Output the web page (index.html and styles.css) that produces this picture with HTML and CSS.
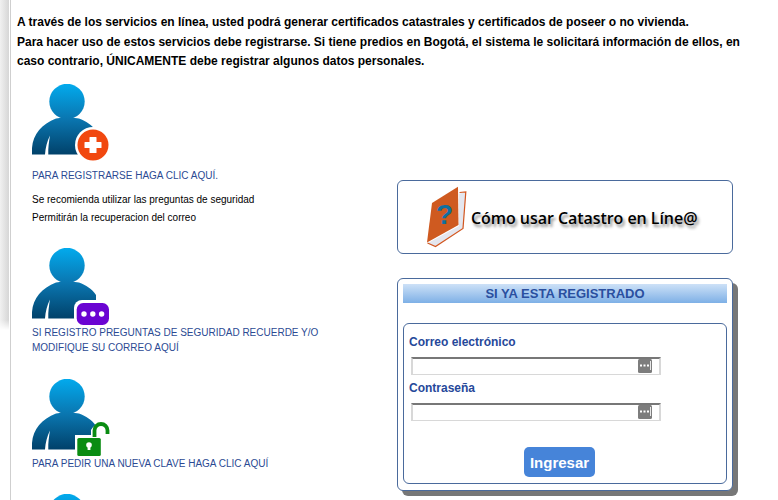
FILE: index.html
```html
<!DOCTYPE html>
<html lang="es">
<head>
<meta charset="utf-8">
<title>Catastro en Línea</title>
<link rel="stylesheet" href="styles.css">
</head>
<body>
<svg class="defs" width="0" height="0" aria-hidden="true">
  <defs>
    <linearGradient id="pg" gradientUnits="userSpaceOnUse" x1="0" y1="0" x2="0" y2="70">
      <stop offset="0" stop-color="#02aaed"/>
      <stop offset="0.5" stop-color="#0a76b0"/>
      <stop offset="1" stop-color="#01426b"/>
    </linearGradient>
    <symbol id="person" viewBox="0 0 80 80">
      <circle cx="35" cy="17.500" r="17.700" fill="url(#pg)"/>
      <path fill="url(#pg)" d="M0 70.500V64C1 50 10 40 24 34.500L35 33L47 34.500C54 37 60 41 64 47L64 70.500H16.300C16 64 17 57 18 51.500C15 57 13.500 64 13 70.500Z"/>
    </symbol>
  </defs>
</svg>
<div class="edge"></div>
<main class="page">
  <section class="intro">
    <p>A través de los servicios en línea, usted podrá generar certificados catastrales y certificados de poseer o no vivienda.</p>
    <p>Para hacer uso de estos servicios debe registrarse. Si tiene predios en Bogotá, el sistema le solicitará información de ellos, en caso contrario, ÚNICAMENTE debe registrar algunos datos personales.</p>
  </section>
  <div class="columns">
    <div class="left">
      <div class="item item-one">
        <svg class="avatar" viewBox="0 0 80 77" width="80" height="77">
          <use href="#person" width="80" height="80"/>
          <circle cx="61" cy="61" r="18" fill="#fff"/>
          <circle cx="61" cy="61" r="15.500" fill="#f1480f"/>
          <path d="M58 53h6a.5.500 0 0 1 .5.500V58h4.500a.5.500 0 0 1 .5.500v5a.5.500 0 0 1-.5.500h-4.500v4.500a.5.500 0 0 1-.5.500h-6a.5.500 0 0 1-.5-.500V64H53a.5.500 0 0 1-.5-.500v-5a.5.500 0 0 1 .5-.500h4.500v-4.500a.5.500 0 0 1 .5-.500z" fill="#fff"/>
        </svg>
        <a class="link" href="#">PARA REGISTRARSE HAGA CLIC AQUÍ.</a>
        <p class="note">Se recomienda utilizar las preguntas de seguridad</p>
        <p class="note">Permitirán la recuperacion del correo</p>
      </div>
      <div class="item item-two">
        <svg class="avatar" viewBox="0 0 80 77" width="80" height="77">
          <use href="#person" width="80" height="80"/>
          <rect x="42" y="52" width="36" height="26" rx="8" fill="#fff"/>
          <rect x="44.700" y="55" width="32.300" height="22" rx="6.500" fill="#6a04d2"/>
          <circle cx="52" cy="66" r="2.700" fill="#fff"/>
          <circle cx="60.800" cy="66" r="2.700" fill="#fff"/>
          <circle cx="69.600" cy="66" r="2.700" fill="#fff"/>
        </svg>
        <a class="link" href="#">SI REGISTRO PREGUNTAS DE SEGURIDAD RECUERDE Y/O MODIFIQUE SU CORREO AQUÍ</a>
      </div>
      <div class="item item-three">
        <svg class="avatar" viewBox="0 0 80 77" width="80" height="77">
          <use href="#person" width="80" height="80"/>
          <path d="M43 56h16v-5a12 12 0 0 1 21 0v13h-9v14h-28z" fill="#fff"/>
          <path d="M62.500 58v-6.500a6.500 6.500 0 0 1 13 0v3.500" fill="none" stroke="#0a8c12" stroke-width="3.800"/>
          <rect x="45.300" y="59" width="23.500" height="18" rx="1.500" fill="#0a8c12"/>
          <circle cx="57" cy="66" r="2.800" fill="#fff"/>
          <rect x="55.600" y="66" width="2.800" height="5" fill="#fff"/>
        </svg>
        <a class="link" href="#">PARA PEDIR UNA NUEVA CLAVE HAGA CLIC AQUÍ</a>
      </div>
      <div class="item item-four">
        <svg class="avatar" viewBox="0 0 80 77" width="80" height="77">
          <use href="#person" width="80" height="80"/>
        </svg>
      </div>
    </div>
    <div class="right">
      <a class="help" href="#">
        <svg class="book" viewBox="0 0 42 62" width="42" height="62">
          <path d="M33 7.500L40 6.500L37 42L9 60.500L2 57L33 40Z" fill="#e4e6ee"/>
          <path d="M33.500 6.500L39.800 6L37 42.500L9.500 60.500L1.500 57" fill="none" stroke="#d2561f" stroke-width="1.200"/>
          <path d="M32 0.700L32.500 39L1 56.500L6 17Z" fill="#cf5a20"/>
          <text class="book-mark" x="10" y="38">?</text>
        </svg>
        <span class="help-text">Cómo usar Catastro en Líne@</span>
      </a>
      <section class="login">
        <h2 class="login-title">SI YA ESTA REGISTRADO</h2>
        <form class="login-form">
          <label class="label" for="correo">Correo electrónico</label>
          <div class="field">
            <input class="input" id="correo" type="text">
            <svg class="key" viewBox="0 0 14 14" width="14" height="14">
              <rect width="14" height="14" rx="1.500" fill="#7d7d7d"/>
              <rect x="2" y="5.500" width="2" height="2" fill="#fff"/>
              <rect x="5.500" y="5.500" width="2" height="2" fill="#fff"/>
              <rect x="9" y="5.500" width="2" height="2" fill="#fff"/>
              <rect x="12" y="2" width="1" height="9" fill="#e8e8e8"/>
            </svg>
          </div>
          <label class="label label-next" for="clave">Contraseña</label>
          <div class="field">
            <input class="input" id="clave" type="password">
            <svg class="key" viewBox="0 0 14 14" width="14" height="14">
              <rect width="14" height="14" rx="1.500" fill="#7d7d7d"/>
              <rect x="2" y="5.500" width="2" height="2" fill="#fff"/>
              <rect x="5.500" y="5.500" width="2" height="2" fill="#fff"/>
              <rect x="9" y="5.500" width="2" height="2" fill="#fff"/>
              <rect x="12" y="2" width="1" height="9" fill="#e8e8e8"/>
            </svg>
          </div>
          <div class="actions">
            <button class="submit" type="button">Ingresar</button>
          </div>
        </form>
      </section>
    </div>
  </div>
</main>
</body>
</html>
```
FILE: styles.css
```css
* {
  box-sizing: border-box;
}

html,
body {
  margin: 0;
  height: 500px;
  overflow: hidden;
  background: #fff;
}

body {
  font-family: "Liberation Sans", Arial, sans-serif;
  color: #000;
}

.defs {
  position: absolute;
}

.edge {
  position: absolute;
  left: 0;
  top: 0;
  width: 9px;
  height: 330px;
  background: linear-gradient(to right, #f1f1f1, #d6d6d6);
  -webkit-mask-image: linear-gradient(to bottom, #000 97%, transparent);
  mask-image: linear-gradient(to bottom, #000 97%, transparent);
}

.page {
  margin-left: 10px;
  height: 500px;
  overflow: hidden;
  border-left: 1px solid #cfcfcf;
  padding: 13px 0 0 6px;
}

.intro {
  width: 730px;
  height: 71px;
  font-size: 12px;
  font-weight: bold;
  line-height: 19px;
}

.intro p {
  margin: 0 0 1px;
}

.columns {
  display: grid;
  grid-template-columns: 365px 336px;
  padding-left: 15px;
}

.left {
  display: flex;
  flex-direction: column;
}

.avatar {
  display: block;
  overflow: visible;
}

.link {
  display: block;
  font-size: 10px;
  line-height: 15px;
  color: #2b4a93;
  text-decoration: none;
  width: 300px;
}

.item-one .link {
  margin-top: 7px;
}

.note {
  margin: 0;
  font-size: 10px;
  line-height: 18px;
}

.item-one .link + .note {
  margin-top: 8px;
}

.item-two {
  margin-top: 21px;
}

.item-three {
  margin-top: 24px;
}

.item-four {
  margin-top: 23px;
}

.right {
  padding-top: 96px;
}

.help {
  display: flex;
  align-items: center;
  height: 74px;
  border: 1px solid #4a6a9c;
  border-radius: 6px;
  padding-left: 28px;
  color: #000;
  text-decoration: none;
}

.book {
  display: block;
  flex: none;
  margin-right: 3px;
}

.book-mark {
  font-family: "Liberation Sans", Arial, sans-serif;
  font-size: 28px;
  font-weight: bold;
  fill: #0f6f9f;
}

.help-text {
  padding-top: 1px;
  font-family: "Open Sans", sans-serif;
  font-size: 16px;
  font-weight: 600;
  letter-spacing: -0.05px;
  text-shadow: 2px 3px 3px #8a8a8a;
}

.login {
  margin-top: 24px;
  height: 213px;
  border: 1px solid #4a6a9c;
  border-radius: 6px;
  padding: 5px;
  background: #fff;
  box-shadow: 5px 5px 0 #777;
}

.login-title {
  margin: 0;
  height: 19px;
  font-size: 13px;
  line-height: 19px;
  font-weight: bold;
  text-align: center;
  color: #2a4f9f;
  background: linear-gradient(to bottom, #cde1f7, #7eb0e6);
}

.login-form {
  margin-top: 20px;
  height: 161px;
  border: 1px solid #4a6a9c;
  border-radius: 6px;
  padding: 10px 5px 0;
}

.label {
  display: block;
  font-size: 12px;
  font-weight: bold;
  line-height: 16px;
  color: #26489a;
}

.label-next {
  margin-top: 5px;
}

.field {
  position: relative;
  width: 250px;
  height: 18px;
  margin: 7px 0 0 2px;
}

.input {
  display: block;
  width: 100%;
  height: 100%;
  margin: 0;
  padding: 0;
  background: #fff;
  border-style: solid;
  border-width: 2px 2px 1px;
  border-color: #777 #d8d8d8 #d8d8d8;
  border-radius: 0;
  outline: none;
}

.key {
  position: absolute;
  right: 9px;
  top: 2px;
}

.actions {
  display: flex;
  margin: 26px 0 0 115px;
}

.submit {
  width: 71px;
  height: 30px;
  padding: 0;
  border: 0;
  border-radius: 5px;
  background: #4684d9;
  color: #fff;
  font-family: "Liberation Sans", Arial, sans-serif;
  font-size: 15px;
  font-weight: bold;
}
```
